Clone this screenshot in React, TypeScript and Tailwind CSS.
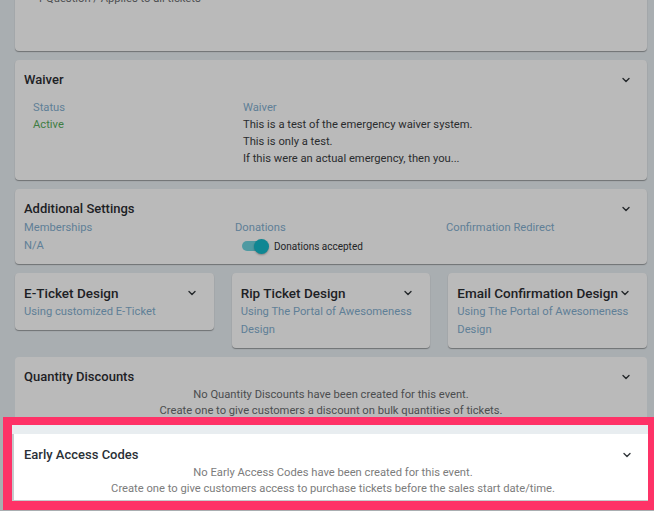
import React from "react";

function Chevron({ className = "" }: { className?: string }) {
  return (
    <svg width="8" height="6" viewBox="0 0 8 6" className={className} fill="none">
      <polyline points="1,1.5 4,4.5 7,1.5" stroke="currentColor" strokeWidth="1.4" strokeLinecap="round" strokeLinejoin="round" />
    </svg>
  );
}

const dimCard = "bg-[#bababa] rounded-[4px] shadow-[0_1px_1px_rgba(0,0,0,0.35)]";

export default function App() {
  return (
    <div
      className="min-h-[511px] h-[511px] overflow-hidden bg-[#a9aeb1] pl-[15px] pr-[7px] flex flex-col gap-[9px]"
      style={{ fontFamily: "Roboto, 'Liberation Sans', sans-serif" }}
    >
      {/* Top (cut-off) card */}
      <div className={`${dimCard} -mt-[30px] h-[81px] pt-[22px] pl-[22px] shrink-0`}>
        <div className="text-[11.2px] leading-[13px] text-[#4d4f51]">1 Question / Applies to all tickets</div>
      </div>

      {/* Waiver */}
      <div className={`${dimCard} pt-[10px] pb-[13px] pl-[9px] pr-[17px] shrink-0`}>
        <div className="flex items-center justify-between h-[20px]">
          <span className="text-[13px] font-medium text-[#1d2125]">Waiver</span>
          <Chevron className="text-[#25292c]" />
        </div>
        <div className="mt-[9px] pl-[9px] grid grid-cols-[210px_1fr] text-[11.2px] leading-[17px]">
          <div>
            <div className="text-[#5f7f97]">Status</div>
            <div className="text-[#3f7d43]">Active</div>
          </div>
          <div>
            <div className="text-[#5f7f97]">Waiver</div>
            <div className="text-[#2a2c2e]">This is a test of the emergency waiver system.</div>
            <div className="text-[#2a2c2e]">This is only a test.</div>
            <div className="text-[#2a2c2e]">If this were an actual emergency, then you...</div>
          </div>
        </div>
      </div>

      {/* Additional Settings */}
      <div className={`${dimCard} pt-[10px] pb-[8px] pl-[9px] pr-[17px] shrink-0`}>
        <div className="flex items-center justify-between h-[20px]">
          <span className="text-[13px] font-medium text-[#1d2125]">Additional Settings</span>
          <Chevron className="text-[#25292c]" />
        </div>
        <div className="grid grid-cols-[211px_211px_1fr] text-[11.2px]">
          <div>
            <div className="leading-[17px] text-[#5f7f97]">Memberships</div>
            <div className="h-[20px] flex items-center text-[#5f7f97]">N/A</div>
          </div>
          <div>
            <div className="leading-[17px] text-[#5f7f97]">Donations</div>
            <div className="h-[20px] flex items-center pl-[7px] gap-[5px]">
              <div className="relative w-[27px] h-[15px] flex items-center">
                <div className="w-[24px] h-[10px] rounded-full bg-[#4f9aa2]" />
                <div className="absolute right-0 top-0 w-[15px] h-[15px] rounded-full bg-[#0e8793] shadow-[0_1px_2px_rgba(0,0,0,0.3)]" />
              </div>
              <span className="text-[10px] text-[#222426]">Donations accepted</span>
            </div>
          </div>
          <div>
            <div className="leading-[17px] text-[#5f7f97]">Confirmation Redirect</div>
          </div>
        </div>
      </div>

      {/* Design cards */}
      <div className="grid grid-cols-3 gap-[18px] items-start shrink-0">
        {[
          { t: "E-Ticket Design", s: "Using customized E-Ticket" },
          { t: "Rip Ticket Design", s: "Using The Portal of Awesomeness Design" },
          { t: "Email Confirmation Design", s: "Using The Portal of Awesomeness Design" },
        ].map((c) => (
          <div key={c.t} className={`${dimCard} pt-[10px] pb-[9px] pl-[9px] pr-[18px]`}>
            <div className="flex items-center justify-between h-[20px] gap-[3px]">
              <span className="text-[13.5px] font-medium text-[#1d2125] whitespace-nowrap">{c.t}</span>
              <Chevron className="text-[#25292c] shrink-0" />
            </div>
            <div className="text-[11.2px] leading-[18px] text-[#5f7f97]">{c.s}</div>
          </div>
        ))}
      </div>

      {/* Quantity Discounts */}
      <div className="bg-[#bababa] rounded-t-[4px] pt-[10px] shrink-0">
        <div className="flex items-center justify-between h-[20px] pl-[9px] pr-[17px]">
          <span className="text-[13px] font-medium text-[#1d2125]">Quantity Discounts</span>
          <Chevron className="text-[#25292c]" />
        </div>
        <div className="text-center text-[11.2px] leading-[16px] text-[#4b4d4f]">
          <div>No Quantity Discounts have been created for this event.</div>
          <div>Create one to give customers a discount on bulk quantities of tickets.</div>
        </div>
      </div>

      {/* Highlighted Early Access Codes */}
      <div className="-mt-[11px] -ml-[12px] -mr-[7px] border-t-[8px] border-l-[9px] border-r-[6px] border-b-[9px] border-[#fe3267] bg-[#e8edf0] pt-[9px] shrink-0">
        <div className="bg-white border-l-[2px] border-b border-[#c6cacc] pt-[11px] pb-[3px]">
          <div className="flex items-center justify-between h-[20px] pl-[10px] pr-[17px]">
            <span className="text-[13px] font-medium text-[#2a3036]">Early Access Codes</span>
            <Chevron className="text-[#33383c]" />
          </div>
          <div className="text-center text-[11.2px] leading-[16px] text-[#7c7c7c] pl-[4px]">
            <div>No Early Access Codes have been created for this event.</div>
            <div>Create one to give customers access to purchase tickets before the sales start date/time.</div>
          </div>
        </div>
      </div>
    </div>
  );
}
